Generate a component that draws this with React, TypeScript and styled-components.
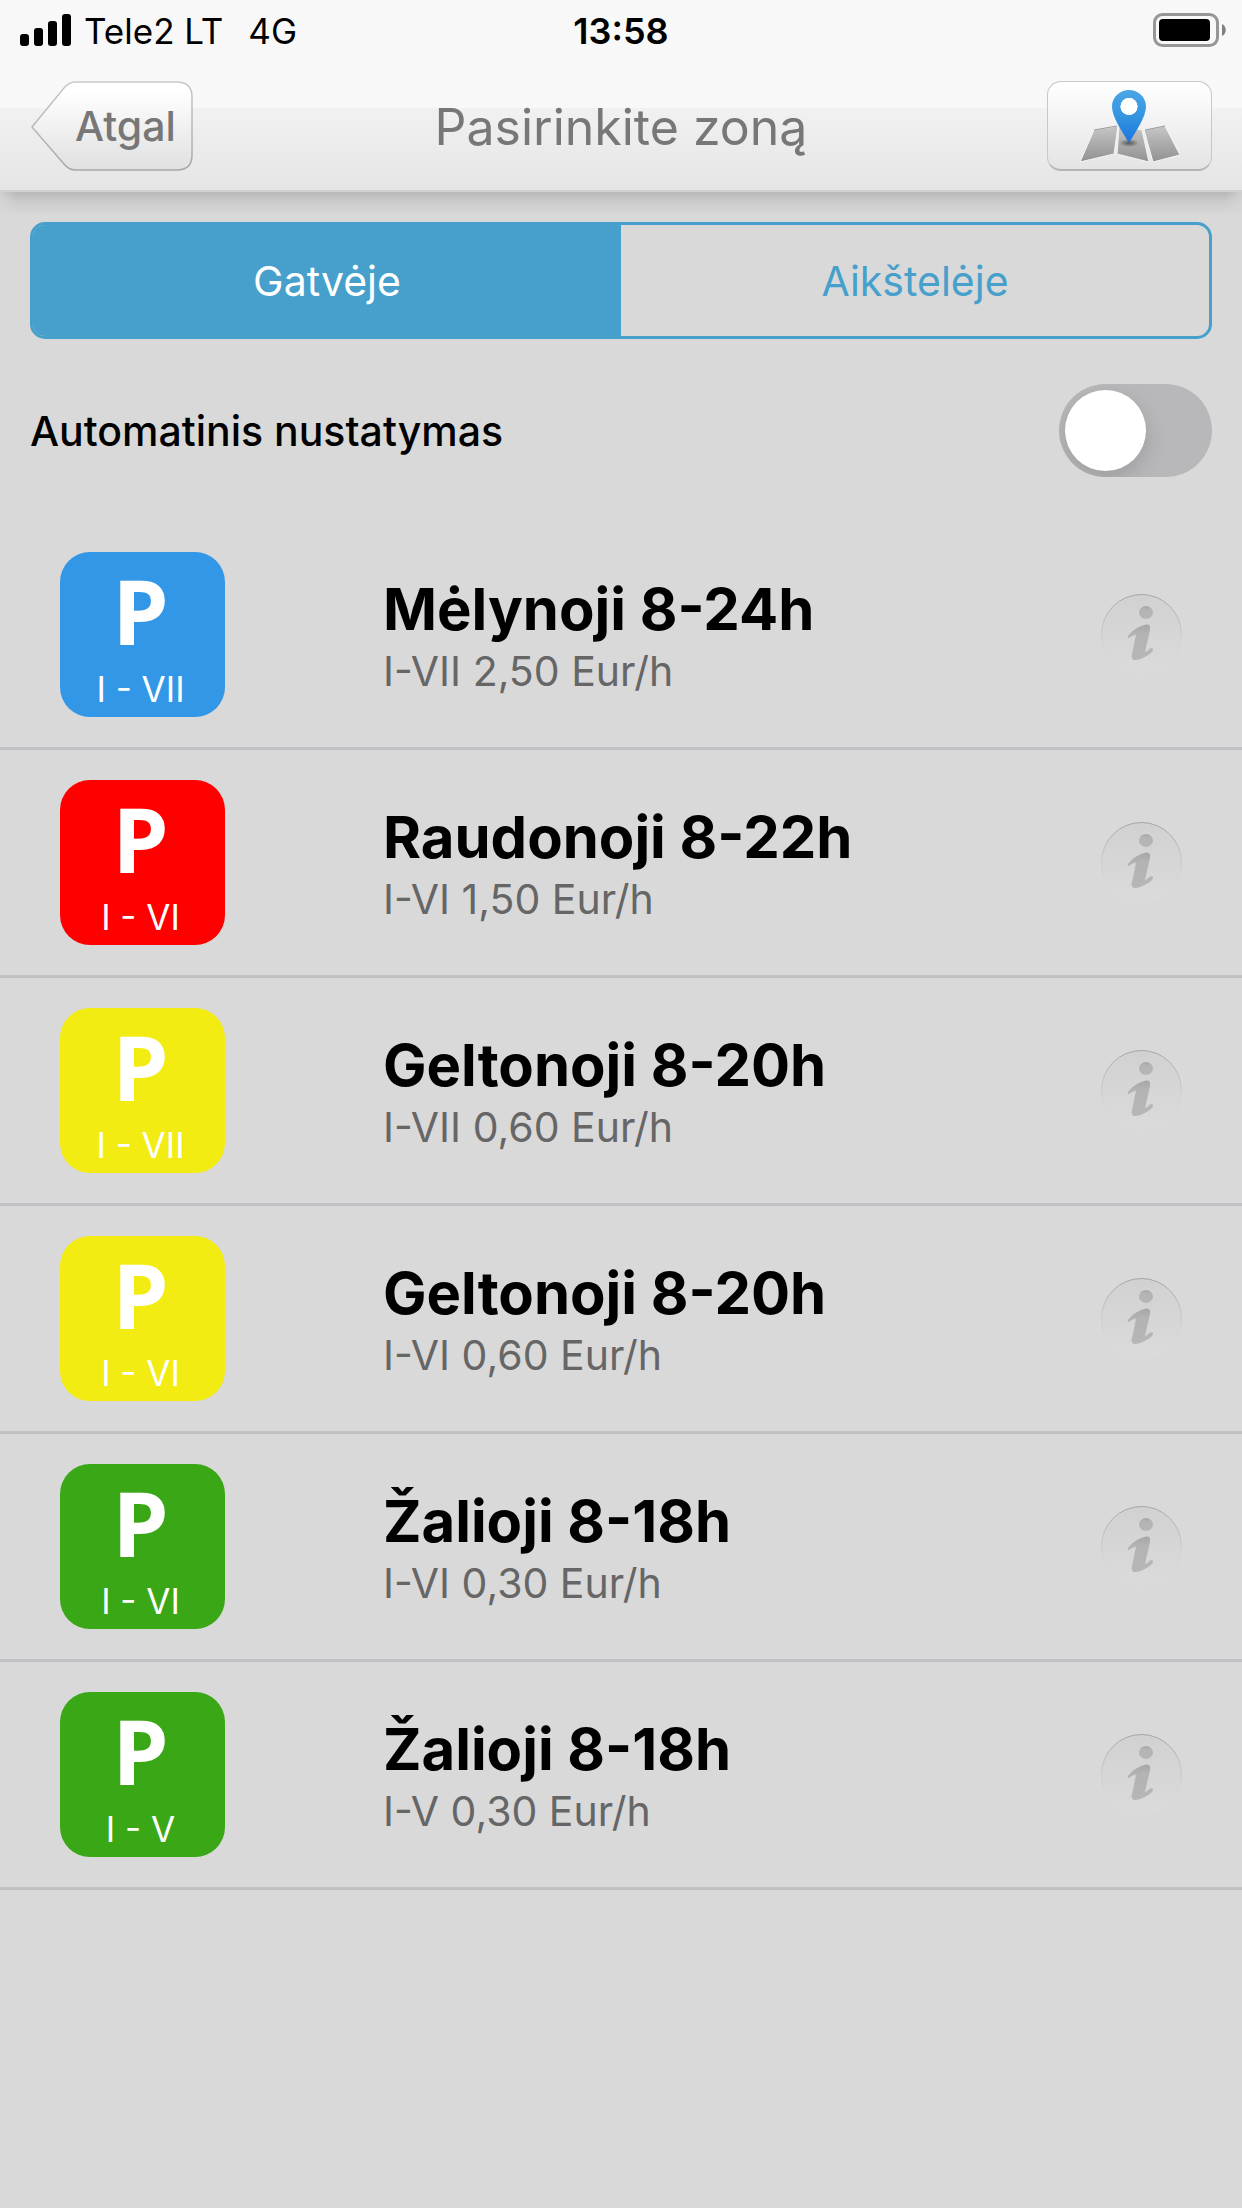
import { useState } from 'react';
import styled, { createGlobalStyle } from 'styled-components';

const GlobalStyle = createGlobalStyle`
  *, *::before, *::after { box-sizing: border-box; }
  body {
    margin: 0;
    background: #d9d9d9;
    color: #000;
    font-family: Inter, "Noto Sans", sans-serif;
  }
  button { font: inherit; border: 0; padding: 0; background: none; cursor: pointer; }
`;

const Header = styled.header`
  position: relative;
  background: #f8f8f8;
  &::after {
    content: '';
    position: absolute;
    top: 100%;
    left: 0;
    right: 0;
    height: 24px;
    background: linear-gradient(#b8b8b8, #cbcbcb 40%, #d9d9d9);
    mask-image: linear-gradient(
      90deg,
      rgba(0, 0, 0, 0.3),
      #000 16px,
      #000 calc(100% - 16px),
      rgba(0, 0, 0, 0.3)
    );
  }
`;

const StatusBar = styled.div`
  display: grid;
  grid-template-columns: 1fr auto 1fr;
  align-items: center;
  height: 62px;
  padding: 0 16px;
  font-size: 35px;
  line-height: 62px;
`;

const Carrier = styled.div`
  display: flex;
  align-items: center;
  gap: 13px;
  padding-left: 4px;
`;

const Network = styled.span`
  margin-left: 12px;
`;

const Clock = styled.time`
  font-size: 36px;
  font-weight: 600;
`;

const BatteryIcon = styled.svg`
  justify-self: end;
`;

const NavBar = styled.div`
  display: grid;
  grid-template-columns: 1fr auto 1fr;
  align-items: center;
  height: 130px;
  padding: 0 30px;
  border-bottom: 2px solid #d0d0d0;
  background: linear-gradient(#f8f8f8 46px, #f1f1f1 46px, #e5e5e5);
`;

const BackButton = styled.button`
  display: grid;
  width: 165px;
  height: 90px;
  color: #777;
  font-size: 41px;
  font-weight: 500;
  line-height: 90px;
  > * { grid-area: 1 / 1; }
`;

const BackLabel = styled.span`
  padding-left: 45px;
  text-align: left;
`;

const Title = styled.h1`
  margin: 0;
  padding-top: 2px;
  color: #777;
  font-size: 50px;
  font-weight: 400;
  line-height: 72px;
`;

const MapButton = styled.button`
  display: flex;
  align-items: center;
  justify-content: center;
  justify-self: end;
  width: 165px;
  height: 90px;
  border: 1px solid #c8c8c8;
  border-bottom: 2px solid #b4b4b4;
  border-radius: 14px;
  background: linear-gradient(#fff, #e4e4e4);
`;

const Controls = styled.section`
  padding: 30px 30px 45px;
`;

const Segments = styled.div`
  display: flex;
  height: 117px;
  border: 3px solid #46a0cb;
  border-radius: 15px;
  overflow: hidden;
`;

const Segment = styled.button<{ $active: boolean }>`
  flex: 1;
  font-size: 41px;
  line-height: 48px;
  color: ${(p) => (p.$active ? '#fff' : '#46a0cb')};
  background: ${(p) => (p.$active ? '#46a0cb' : 'transparent')};
`;

const AutoRow = styled.label`
  display: flex;
  align-items: center;
  justify-content: space-between;
  margin-top: 45px;
  font-size: 41px;
  font-weight: 500;
  line-height: 48px;
`;

const Switch = styled.input`
  appearance: none;
  width: 153px;
  height: 93px;
  margin: 0;
  padding: 6px;
  border-radius: 48px;
  background: #b8b8ba;
  overflow: hidden;
  cursor: pointer;
  &::before {
    content: '';
    display: block;
    width: 81px;
    height: 81px;
    border-radius: 50%;
    background: #fff;
    box-shadow: 0 8px 22px rgba(0, 0, 0, 0.15);
  }
  &:checked { background: #46a0cb; }
  &:checked::before { margin-left: auto; }
`;

const ZoneList = styled.ul`
  margin: 0;
  padding: 0;
  list-style: none;
`;

const ZoneRow = styled.li`
  display: flex;
  align-items: center;
  padding: 30px 60px;
  border-bottom: 3px solid #c0c0c5;
`;

const Badge = styled.div<{ $color: string }>`
  display: flex;
  flex-direction: column;
  align-items: center;
  width: 165px;
  height: 165px;
  padding: 10px 4px 0 0;
  border-radius: 30px;
  background: ${(p) => p.$color};
  color: #fff;
`;

const BadgeLetter = styled.span`
  font-family: "Open Sans", "Noto Sans", sans-serif;
  font-size: 90px;
  font-weight: 700;
  line-height: 96px;
`;

const BadgeDays = styled.span`
  font-size: 35px;
  line-height: 62px;
`;

const ZoneText = styled.div`
  flex: 1;
  margin-left: 158px;
`;

const ZoneName = styled.h2`
  margin: 0;
  font-size: 58px;
  font-weight: 700;
  line-height: 72px;
`;

const ZonePrice = styled.p`
  margin: 0;
  color: #666;
  font-size: 41px;
  line-height: 52px;
`;

const InfoButton = styled.button`
  display: flex;
`;

const zones = [
  { name: 'Mėlynoji 8-24h', price: 'I-VII 2,50 Eur/h', days: 'I - VII', color: '#3397e8' },
  { name: 'Raudonoji 8-22h', price: 'I-VI 1,50 Eur/h', days: 'I - VI', color: '#ff0000' },
  { name: 'Geltonoji 8-20h', price: 'I-VII 0,60 Eur/h', days: 'I - VII', color: '#f2ec13' },
  { name: 'Geltonoji 8-20h', price: 'I-VI 0,60 Eur/h', days: 'I - VI', color: '#f2ec13' },
  { name: 'Žalioji 8-18h', price: 'I-VI 0,30 Eur/h', days: 'I - VI', color: '#3aa716' },
  { name: 'Žalioji 8-18h', price: 'I-V 0,30 Eur/h', days: 'I - V', color: '#3aa716' },
];

const SignalIcon = () => (
  <svg width="51" height="34" viewBox="0 0 51 34" aria-hidden="true">
    <rect x="0" y="20" width="9" height="12" rx="3" />
    <rect x="14" y="14" width="9" height="18" rx="3" />
    <rect x="28" y="7" width="9" height="25" rx="3" />
    <rect x="42" y="0" width="9" height="32" rx="3" />
  </svg>
);

const Battery = () => (
  <BatteryIcon width="73" height="36" viewBox="0 0 73 36" role="img" aria-label="Baterija">
    <rect x="1.5" y="1.5" width="63" height="31" rx="8" fill="none" stroke="#969696" strokeWidth="3" />
    <rect x="6" y="6" width="51" height="22" rx="4" />
    <path d="M69 11c5 2 5 10 0 12z" fill="#808080" />
  </BatteryIcon>
);

const BackShape = () => (
  <svg width="165" height="90" viewBox="0 0 165 90" aria-hidden="true">
    <defs>
      <linearGradient id="backFill" x1="0" y1="0" x2="0" y2="1">
        <stop offset="0.1" stopColor="#fff" />
        <stop offset="1" stopColor="#e0e0e0" />
      </linearGradient>
      <linearGradient id="backLine" x1="0" y1="0" x2="0" y2="1">
        <stop offset="0" stopColor="#c8c8c8" />
        <stop offset="1" stopColor="#a8a8a8" />
      </linearGradient>
    </defs>
    <path
      d="M45 1H147Q162 1 162 16V74Q162 89 147 89H45Q39 89 34 83L2 46L34 7Q39 1 45 1Z"
      fill="url(#backFill)"
      stroke="url(#backLine)"
      strokeWidth="1.5"
      strokeLinejoin="round"
    />
  </svg>
);

const MapIcon = () => (
  <svg width="100" height="74" viewBox="0 0 100 74" aria-hidden="true">
    <defs>
      <linearGradient id="mapFill" x1="0" y1="0" x2="0" y2="1">
        <stop offset="0" stopColor="#c6c6c6" />
        <stop offset="1" stopColor="#919191" />
      </linearGradient>
      <linearGradient id="pinFill" x1="0" y1="0" x2="0" y2="1">
        <stop offset="0" stopColor="#4aa6e6" />
        <stop offset="0.5" stopColor="#3494e0" />
        <stop offset="1" stopColor="#1c74dd" />
      </linearGradient>
      <radialGradient id="pinShadow">
        <stop offset="0" stopColor="#333" stopOpacity="0.7" />
        <stop offset="1" stopColor="#333" stopOpacity="0" />
      </radialGradient>
    </defs>
    <g stroke="#f6f6f6" strokeWidth="1">
      <path d="M14 41L38 37L34 65L0 73Z" fill="url(#mapFill)" />
      <path d="M39 37L62 41L69 73L37 65Z" fill="url(#mapFill)" />
      <path d="M64 41L85 37L100 66L73 73Z" fill="url(#mapFill)" />
    </g>
    <path d="M14 41L37 37M65 41L85 37" stroke="#999" strokeWidth="1" />
    <ellipse cx="49" cy="54" rx="10" ry="4" fill="url(#pinShadow)" />
    <path
      fillRule="evenodd"
      d="M49 1C58 1 66 8 66 17.500C66 28 56 42 49 54C42 42 32 28 32 17.500C32 8 40 1 49 1ZM49 9A8.500 8.500 0 1 0 49 26A8.500 8.500 0 1 0 49 9Z"
      fill="url(#pinFill)"
    />
    <circle cx="49" cy="17.500" r="8.500" fill="#fff" />
  </svg>
);

const InfoIcon = () => (
  <svg width="81" height="81" viewBox="0 0 81 81" aria-hidden="true">
    <defs>
      <linearGradient id="infoFill" x1="0" y1="0" x2="0" y2="1">
        <stop offset="0" stopColor="#d1d1d1" />
        <stop offset="0.9" stopColor="#dadada" />
      </linearGradient>
      <linearGradient id="infoLine" x1="0" y1="0" x2="0" y2="1">
        <stop offset="0" stopColor="#a4a4a4" />
        <stop offset="0.6" stopColor="#d2d2d2" />
        <stop offset="0.9" stopColor="#dadada" />
      </linearGradient>
      <linearGradient id="glyphFill" x1="0" y1="0" x2="0" y2="1">
        <stop offset="0" stopColor="#a6a6a6" />
        <stop offset="0.25" stopColor="#b3b3b3" />
        <stop offset="1" stopColor="#b6b6b6" />
      </linearGradient>
    </defs>
    <circle cx="40.500" cy="40.500" r="40" fill="url(#infoFill)" stroke="url(#infoLine)" />
    <ellipse cx="45" cy="18.500" rx="7" ry="6.500" fill="url(#glyphFill)" />
    <path
      d="M27 42C32 35 41 31 46 30.500C49 30.500 49.500 33 49 36L44 58C46 58 48 54 51 54C53 55 52 57 50 59C45 63 38 66 34 66C31 66 30 63 31 60L35 41C33 40 30 43 28 44C26.500 44 26.500 43 27 42Z"
      fill="url(#glyphFill)"
    />
  </svg>
);

export default function App() {
  const [place, setPlace] = useState('Gatvėje');
  return (
    <>
      <GlobalStyle />
      <Header>
        <StatusBar>
          <Carrier>
            <SignalIcon />
            <span>Tele2 LT</span>
            <Network>4G</Network>
          </Carrier>
          <Clock>13:58</Clock>
          <Battery />
        </StatusBar>
        <NavBar>
          <BackButton type="button">
            <BackShape />
            <BackLabel>Atgal</BackLabel>
          </BackButton>
          <Title>Pasirinkite zoną</Title>
          <MapButton type="button" aria-label="Žemėlapis">
            <MapIcon />
          </MapButton>
        </NavBar>
      </Header>
      <main>
        <Controls>
          <Segments>
            {['Gatvėje', 'Aikštelėje'].map((label) => (
              <Segment
                key={label}
                type="button"
                $active={place === label}
                aria-pressed={place === label}
                onClick={() => setPlace(label)}
              >
                {label}
              </Segment>
            ))}
          </Segments>
          <AutoRow>
            Automatinis nustatymas
            <Switch type="checkbox" role="switch" />
          </AutoRow>
        </Controls>
        <ZoneList>
          {zones.map((zone) => (
            <ZoneRow key={zone.name + zone.days}>
              <Badge $color={zone.color}>
                <BadgeLetter>P</BadgeLetter>
                <BadgeDays>{zone.days}</BadgeDays>
              </Badge>
              <ZoneText>
                <ZoneName>{zone.name}</ZoneName>
                <ZonePrice>{zone.price}</ZonePrice>
              </ZoneText>
              <InfoButton type="button" aria-label={`Informacija: ${zone.name}`}>
                <InfoIcon />
              </InfoButton>
            </ZoneRow>
          ))}
        </ZoneList>
      </main>
    </>
  );
}
